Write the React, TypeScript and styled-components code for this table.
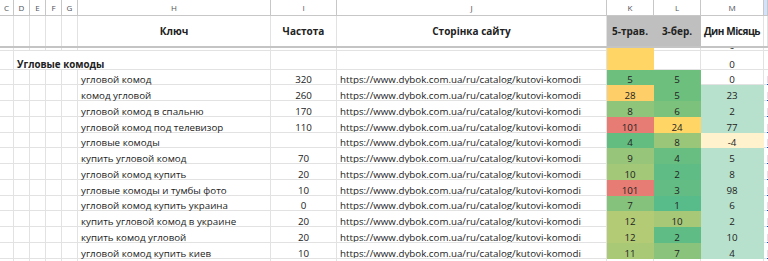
import React from "react";
import styled, { createGlobalStyle } from "styled-components";

const COLS = "14px 16px 16px 16px 16px 193px 66px 270px 47px 47px 63px 1fr";
const GRID = "#e2e2e2";
const HEAD_LINE = "#c7c7c7";

const GlobalStyle = createGlobalStyle`
  html, body {
    margin: 0;
    padding: 0;
    background: #fff;
    overflow: hidden;
  }
  body {
    font-family: "Open Sans", "Noto Sans", sans-serif;
  }
`;

const Sheet = styled.div`
  width: 768px;
  height: 261px;
  overflow: hidden;
  background: #fff;
`;

const Row = styled.div<{ $h: number }>`
  display: grid;
  grid-template-columns: ${COLS};
  height: ${(p) => p.$h}px;
`;

const Letter = styled.div<{ $active?: boolean }>`
  box-sizing: border-box;
  border-right: 1px solid ${HEAD_LINE};
  border-bottom: 1px solid ${HEAD_LINE};
  background: ${(p) => (p.$active ? "#d3e3fd" : "#fff")};
  display: flex;
  align-items: center;
  justify-content: center;
  font-size: 8px;
  color: #4f5357;
  overflow: hidden;
`;

const HeadCell = styled.div<{ $gray?: boolean; $tight?: boolean }>`
  box-sizing: border-box;
  border-right: 1px solid ${(p) => (p.$gray ? "#bfbfbf" : GRID)};
  background: ${(p) => (p.$gray ? "#bfbfbf" : "#fff")};
  display: flex;
  align-items: center;
  justify-content: center;
  font-size: 10px;
  font-weight: 700;
  letter-spacing: ${(p) => (p.$tight ? "-0.45px" : "0")};
  color: #222;
  white-space: nowrap;
`;

const Freeze = styled.div`
  height: 2.5px;
  background: #c4c4c4;
`;

const Cell = styled.div<{
  $center?: boolean;
  $bg?: string;
  $bold?: boolean;
  $span?: number;
  $clip?: boolean;
}>`
  box-sizing: border-box;
  min-width: 0;
  border-right: 1px solid ${(p) => p.$bg || GRID};
  border-bottom: 1px solid ${(p) => p.$bg || GRID};
  background: ${(p) => p.$bg || "#fff"};
  display: flex;
  align-items: flex-end;
  justify-content: ${(p) => (p.$center ? "center" : "flex-start")};
  padding: 0 3px;
  font-size: 9.75px;
  line-height: 8px;
  font-weight: ${(p) => (p.$bold ? 700 : 400)};
  color: #222;
  white-space: nowrap;
  overflow: ${(p) => (p.$clip ? "hidden" : "visible")};
  ${(p) => (p.$span ? `grid-column: span ${p.$span};` : "")}
`;

const Link = styled.span`
  color: #1155cc;
  text-decoration: underline;
`;

const URL = "https://www.dybok.com.ua/ru/catalog/kutovi-komodi";

type DataRow = {
  key: string;
  freq: string;
  k: number;
  kBg: string;
  l: number;
  lBg: string;
  m: number;
};

const rows: DataRow[] = [
  { key: "угловой комод", freq: "320", k: 5, kBg: "#6dbf7e", l: 5, lBg: "#6dbf7e", m: 0 },
  { key: "комод угловой", freq: "260", k: 28, kBg: "#fecf68", l: 5, lBg: "#6dbf7e", m: 23 },
  { key: "угловой комод в спальню", freq: "170", k: 8, kBg: "#8ec57b", l: 6, lBg: "#7cc17c", m: 2 },
  { key: "угловой комод под телевизор", freq: "110", k: 101, kBg: "#e67c73", l: 24, lBg: "#ffd666", m: 77 },
  { key: "угловые комоды", freq: "", k: 4, kBg: "#63bd80", l: 8, lBg: "#99c679", m: -4 },
  { key: "купить угловой комод", freq: "70", k: 9, kBg: "#97c67a", l: 4, lBg: "#68bd80", m: 5 },
  { key: "угловой комод купить", freq: "20", k: 10, kBg: "#a2c878", l: 2, lBg: "#5fbc85", m: 8 },
  { key: "угловые комоды и тумбы фото", freq: "10", k: 101, kBg: "#e67c73", l: 3, lBg: "#63bc83", m: 98 },
  { key: "угловой комод купить украина", freq: "0", k: 7, kBg: "#85c27c", l: 1, lBg: "#57bb8a", m: 6 },
  { key: "купить угловой комод в украине", freq: "20", k: 12, kBg: "#b4cb76", l: 10, lBg: "#a7c877", m: 2 },
  { key: "купить комод угловой", freq: "20", k: 12, kBg: "#b4cb76", l: 2, lBg: "#5fbc85", m: 10 },
  { key: "угловой комод купить киев", freq: "10", k: 11, kBg: "#aac977", l: 7, lBg: "#8ac37b", m: 4 },
];

const mBg = (v: number) => (v > 0 ? "#b7e1cd" : v < 0 ? "#fff2cc" : undefined);

const letters = ["C", "D", "E", "F", "G", "H", "I", "J", "K", "L", "M", ""];

function Blanks({ n }: { n: number }) {
  return (
    <>
      {Array.from({ length: n }).map((_, i) => (
        <Cell key={i} />
      ))}
    </>
  );
}

export default function App() {
  return (
    <Sheet>
      <GlobalStyle />
      <Row $h={16}>
        {letters.map((l, i) => (
          <Letter key={i} $active={i === letters.length - 1}>
            {l}
          </Letter>
        ))}
      </Row>
      <Row $h={29.5}>
        <HeadCell />
        <HeadCell />
        <HeadCell />
        <HeadCell />
        <HeadCell />
        <HeadCell>Ключ</HeadCell>
        <HeadCell>Частота</HeadCell>
        <HeadCell>Сторінка сайту</HeadCell>
        <HeadCell $gray>5-трав.</HeadCell>
        <HeadCell $gray>3-бер.</HeadCell>
        <HeadCell $tight>Дин Місяць</HeadCell>
        <HeadCell />
      </Row>
      <Freeze />
      <Row $h={3}>
        <Blanks n={8} />
        <Cell $bg="#ffd666" />
        <Cell />
        <Cell $center $clip>
          0
        </Cell>
        <Cell />
      </Row>
      <Row $h={18.5}>
        <Cell />
        <Cell $span={5} $bold>
          Угловые комоды
        </Cell>
        <Cell />
        <Cell />
        <Cell $bg="#ffd666" />
        <Cell />
        <Cell $center>0</Cell>
        <Cell />
      </Row>
      {rows.map((r) => (
        <Row $h={15.75} key={r.key + r.k}>
          <Blanks n={5} />
          <Cell>{r.key}</Cell>
          <Cell $center>{r.freq}</Cell>
          <Cell $clip>{URL}</Cell>
          <Cell $center $bg={r.kBg}>
            {r.k}
          </Cell>
          <Cell $center $bg={r.lBg}>
            {r.l}
          </Cell>
          <Cell $center $bg={mBg(r.m)}>
            {r.m}
          </Cell>
          <Cell>
            <Link>{URL}</Link>
          </Cell>
        </Row>
      ))}
      <Row $h={10}>
        <Blanks n={12} />
      </Row>
    </Sheet>
  );
}
